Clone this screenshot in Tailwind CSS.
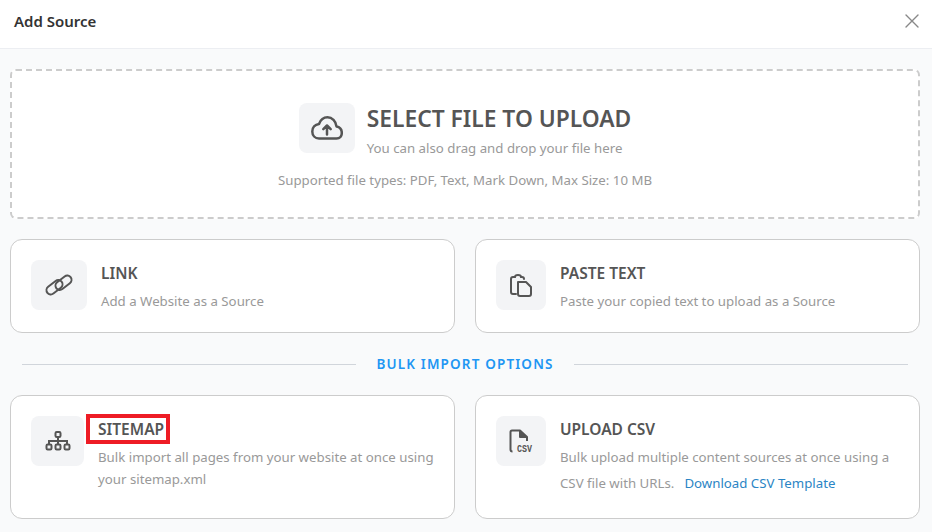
<!DOCTYPE html>
<html lang="en">
<head>
  <meta charset="UTF-8" />
  <title>Add Source</title>
  <script src="https://cdn.jsdelivr.net/npm/@tailwindcss/browser@4"></script>
</head>
<body class="bg-[#f9fafb] font-['Noto_Sans',sans-serif] overflow-hidden h-[532px]">

  <!-- Header -->
  <div class="h-[49px] bg-white border-b border-[#eceef2] flex items-center justify-between pl-[14px] pr-[12px] pb-[6px]">
    <h2 class="text-[15px] font-semibold text-[#333]">Add Source</h2>
    <svg class="w-[16px] h-[16px]" viewBox="0 0 16 16" fill="none" stroke="#888" stroke-width="1.4" stroke-linecap="round"><path d="M2 2l12 12M14 2L2 14"/></svg>
  </div>

  <div class="pl-[10px] pr-[12px] pt-[20px]">
    <!-- Upload -->
    <div class="h-[150px] bg-white border-2 border-dashed border-[#cccccc] rounded-md flex flex-col items-center pt-[32px]">
      <div class="flex gap-[12px]">
        <div class="w-[56px] h-[50px] bg-[#f3f4f6] rounded-lg flex items-center justify-center">
          <svg class="w-[32px] h-[24px]" viewBox="0 0 32 24" fill="none" stroke="#555" stroke-width="2.5" stroke-linecap="round" stroke-linejoin="round"><path d="M8 22.500H25.500C29 22.500 30.800 20 30.800 17C30.800 13.500 28.500 11 25.500 10.500C25 5 21 1.300 16.500 1.300C12.500 1.300 9.500 4 8 8C4 8.500 1.300 11.500 1.300 15.500C1.300 19.500 4 22.500 8 22.500Z"/><path d="M16 18.500V9.500M12.300 13.200L16 9.500L19.700 13.200"/></svg>
        </div>
        <div>
          <p class="text-[22.800px] leading-[32px] font-semibold text-[#555]">SELECT FILE TO UPLOAD</p>
          <p class="mt-[3px] text-[13.250px] leading-[20px] text-[#999]">You can also drag and drop your file here</p>
        </div>
      </div>
      <p class="mt-[12px] text-[13.250px] leading-[20px] text-[#999]">Supported file types: PDF, Text, Mark Down, Max Size: 10 MB</p>
    </div>

    <!-- Link / Paste -->
    <div class="grid grid-cols-2 gap-[20px] mt-[20px]">
      <div class="bg-white border border-[#cccccc] rounded-xl p-5 flex gap-[14px]">
        <div class="w-[56px] h-[50px] bg-[#f3f4f6] rounded-lg flex items-center justify-center">
          <svg class="w-[28px] h-[22px]" viewBox="0 0 28 22" fill="none" stroke="#555" stroke-width="2"><rect x="0.500" y="9" width="18" height="8.500" rx="4.250" transform="rotate(-38 9.500 13.250)"/><rect x="9.500" y="4.500" width="18" height="8.500" rx="4.250" transform="rotate(-38 18.500 8.750)"/></svg>
        </div>
        <div>
          <p class="text-[15.500px] leading-[26px] font-semibold text-[#555]">LINK</p>
          <p class="mt-[4px] text-[13.250px] leading-[22px] text-[#999]">Add a Website as a Source</p>
        </div>
      </div>
      <div class="bg-white border border-[#cccccc] rounded-xl p-5 flex gap-[14px]">
        <div class="w-[50px] h-[50px] bg-[#f3f4f6] rounded-lg flex items-center justify-center">
          <svg class="w-[24px] h-[24px]" viewBox="0 0 24 24" fill="none" stroke="#555" stroke-width="2" stroke-linejoin="round" stroke-linecap="round"><path d="M7 21H4C2.500 21 2 20 2 19V6C2 5 2.500 4 4 4H6M12 4H13C14 4 15 5 15 6"/><path d="M6 4a3 2 0 0 1 6 0"/><path d="M9 9H17L22 14V21C22 22.500 21 23 20 23H11C9.500 23 9 22 9 21Z"/></svg>
        </div>
        <div>
          <p class="text-[15.500px] leading-[26px] font-semibold text-[#555]">PASTE TEXT</p>
          <p class="mt-[4px] text-[13.250px] leading-[22px] text-[#999]">Paste your copied text to upload as a Source</p>
        </div>
      </div>
    </div>

    <!-- Divider -->
    <div class="flex items-center gap-[20px] px-[12px] mt-[21px] h-[20px]">
      <div class="flex-1 h-px bg-[#d1d5db]"></div>
      <span class="text-[13.500px] leading-[18px] font-semibold tracking-[1.150px] text-[#2196f3]">BULK IMPORT OPTIONS</span>
      <div class="flex-1 h-px bg-[#d1d5db]"></div>
    </div>

    <!-- Sitemap / CSV -->
    <div class="grid grid-cols-2 gap-[20px] mt-[21px]">
      <div class="bg-white border border-[#cccccc] rounded-xl p-5 flex gap-[14px]">
        <div class="w-[53px] h-[50px] shrink-0 bg-[#f3f4f6] rounded-lg flex items-center justify-center">
          <svg class="w-[26px] h-[20px]" viewBox="0 0 26 20" fill="none" stroke="#555" stroke-width="2"><rect x="10.500" y="1" width="5" height="5" rx="1.200"/><rect x="1.500" y="13.500" width="5" height="5" rx="1.200"/><rect x="10.500" y="13.500" width="5" height="5" rx="1.200"/><rect x="19.500" y="13.500" width="5" height="5" rx="1.200"/><path d="M13 6V13.500M4 13.500V10H22V13.500"/></svg>
        </div>
        <div class="relative">
          <p class="text-[15.500px] leading-[26px] font-semibold text-[#555]">SITEMAP</p>
          <div class="absolute left-[-12px] top-[-2px] w-[84px] h-[30px] border-4 border-[#ee1c25]"></div>
          <p class="mt-[4px] text-[13.250px] leading-[22px] text-[#999]">Bulk import all pages from your website at once using your sitemap.xml</p>
        </div>
      </div>
      <div class="bg-white border border-[#cccccc] rounded-xl pt-5 px-5 pb-[22px] flex gap-[14px]">
        <div class="w-[50px] h-[50px] shrink-0 bg-[#f3f4f6] rounded-lg flex items-center justify-center pt-[4px] pl-[4px]">
          <svg class="w-[28px] h-[28px]" viewBox="0 0 28 28" fill="none" stroke="#555" stroke-width="2" stroke-linejoin="round"><path d="M3.500 22.500C2 22.500 1.500 21.500 1.500 20.500V3C1.500 2 2 1.500 3 1.500H11L18 8V12"/><path d="M11 1.500V8H18" fill="#555"/><text x="8" y="22.500" font-size="10" font-weight="700" fill="#555" stroke="none" font-family="Liberation Mono" textLength="15" lengthAdjust="spacingAndGlyphs">CSV</text></svg>
        </div>
        <div>
          <p class="text-[15.500px] leading-[26px] font-semibold text-[#555]">UPLOAD CSV</p>
          <div class="mt-[2px] text-[13.250px] leading-[26px] text-[#999]">
            <p>Bulk upload multiple content sources at once using a</p>
            <p class="flex gap-[10px]"><span>CSV file with URLs.</span><a href="#" class="text-[#2b85c5]">Download CSV Template</a></p>
          </div>
        </div>
      </div>
    </div>
  </div>

</body>
</html>
